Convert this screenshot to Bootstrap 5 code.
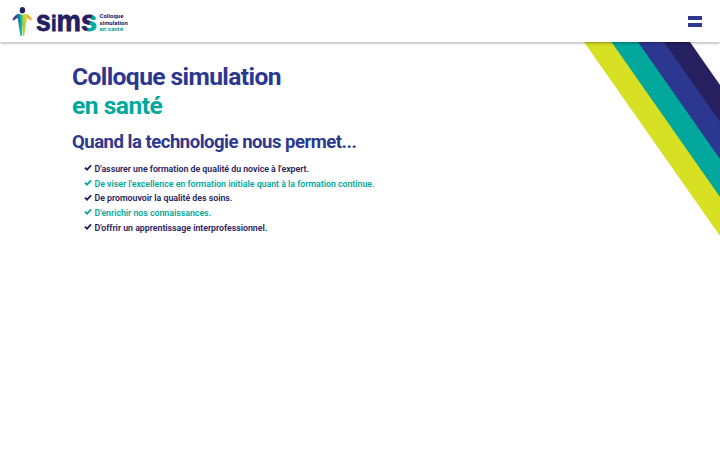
<!DOCTYPE html>
<html lang="fr">
<head>
  <meta charset="UTF-8" />
  <meta name="viewport" content="width=device-width, initial-scale=1" />
  <title>SIMS - Colloque simulation en santé</title>
  <link href="https://cdn.jsdelivr.net/npm/bootstrap@5.3.3/dist/css/bootstrap.min.css" rel="stylesheet">
  <style>
    :root {
      --sims-navy: #262060;
      --sims-blue: #2c388f;
      --sims-teal: #02a89c;
    }

    body {
      font-family: Roboto, "Liberation Sans", sans-serif;
      color: var(--sims-navy);
      background-color: #fff;
      overflow: hidden;
    }

    .site-header {
      height: 42px;
      padding: 0 18px 0 12px;
      background-color: #fff;
      box-shadow: 0 1px 3px rgba(0, 0, 0, .35);
      z-index: 2;
    }

    .wordmark {
      font-family: "Liberation Sans", sans-serif;
    }

    .menu-toggle {
      width: 14px;
      gap: 3px;
    }

    .menu-toggle span {
      height: 4px;
      background-color: var(--sims-blue);
    }

    .stripes {
      top: 42px;
      right: 0;
    }

    .intro {
      padding: 20px 72px 0;
    }

    .intro h1 {
      font-size: 24.6px;
      line-height: 29px;
      letter-spacing: -.6px;
      font-weight: 700;
      color: var(--sims-blue);
      margin-bottom: 10.5px;
    }

    .intro h1 .teal {
      letter-spacing: -.5px;
    }

    .intro h2 {
      font-size: 18.5px;
      line-height: 22px;
      letter-spacing: -.48px;
      font-weight: 700;
      color: var(--sims-blue);
      margin-bottom: 9.5px;
    }

    .teal {
      color: var(--sims-teal);
    }

    .goals {
      padding-left: 12px;
      font-size: 8.8px;
      line-height: 14.7px;
      letter-spacing: -.02px;
      font-weight: 600;
    }

    .goals svg {
      margin-right: 2.5px;
      margin-bottom: 2px;
      fill: var(--sims-navy);
    }

    .goals .teal svg {
      fill: var(--sims-teal);
    }
  </style>
</head>
<body>

<!-- Header -->
<header class="site-header d-flex align-items-center justify-content-between position-relative">
  <a href="#" class="d-flex" aria-label="SIMS">
    <svg width="118" height="42" viewBox="12 0 118 42">
      <defs>
        <linearGradient id="lastS" x1="0" y1="0" x2="1" y2=".7">
          <stop offset=".6" stop-color="#262060" />
          <stop offset=".66" stop-color="#02a89c" />
        </linearGradient>
        <linearGradient id="figure" gradientUnits="userSpaceOnUse" x1="12" y1="0" x2="32" y2="0">
          <stop offset=".1" stop-color="#2c388f" />
          <stop offset=".28" stop-color="#2b5f9d" />
          <stop offset=".42" stop-color="#02a89c" />
          <stop offset=".56" stop-color="#a5cf4c" />
          <stop offset=".7" stop-color="#d7d62e" />
          <stop offset=".9" stop-color="#f3a53a" />
        </linearGradient>
      </defs>
      <!-- Figure -->
      <ellipse cx="22.4" cy="10.2" rx="2.7" ry="3.3" fill="#262060" />
      <path d="M12.4 19.4Q15.5 14.2 19 13.8L22.4 15L25.8 13.8Q29 14.2 32 19.4L30.8 20.6L27 17.8L24.2 36H22.9L22.4 25L21.9 36H20.5L17.6 17.8L13.6 20.6Z" fill="url(#figure)" />
      <!-- Wordmark -->
      <g class="wordmark" font-size="29" font-weight="700" fill="#262060" stroke="#262060" stroke-width=".8">
        <text x="36.1" y="30.8" textLength="14.8" lengthAdjust="spacingAndGlyphs">s</text>
        <text x="51" y="30.8" font-size="22.5" textLength="5.6" lengthAdjust="spacingAndGlyphs">i</text>
        <text x="56.6" y="30.8" textLength="24.4" lengthAdjust="spacingAndGlyphs">m</text>
        <text x="81" y="30.8" textLength="16" lengthAdjust="spacingAndGlyphs" fill="url(#lastS)" stroke="url(#lastS)">s</text>
      </g>
      <g font-size="5.3" font-weight="700" fill="#262060">
        <text x="99.5" y="18.3" textLength="24" lengthAdjust="spacingAndGlyphs">Colloque</text>
        <text x="99.5" y="24.7" textLength="28.3" lengthAdjust="spacingAndGlyphs">simulation</text>
        <text x="99.5" y="31" textLength="23.5" lengthAdjust="spacingAndGlyphs" fill="#02a89c">en santé</text>
      </g>
    </svg>
  </a>
  <div class="menu-toggle d-flex flex-column" role="button" aria-label="Menu">
    <span></span>
    <span></span>
  </div>
</header>

<!-- Corner stripes -->
<svg class="stripes position-absolute" width="136" height="194" viewBox="0 0 136 194">
  <path d="M0 0H136V194Z" fill="#d7e022" />
  <path d="M27.5 0H136V155Z" fill="#02a89c" />
  <path d="M54 0H136V117Z" fill="#2c388f" />
  <path d="M80 0H136V80Z" fill="#262060" />
  <path d="M106 0H136V43Z" fill="#fff" />
</svg>

<!-- Intro -->
<main class="intro">
  <h1>Colloque simulation<br><span class="teal">en santé</span></h1>
  <h2>Quand la technologie nous permet...</h2>
  <ul class="goals list-unstyled mb-0">
    <li class="d-flex align-items-center"><svg width="8" height="8" viewBox="0 0 8 8"><path d="M0.3 4.2L1.6 2.9L3 4.3L6.5 0.8L7.8 2.1L3 6.9Z" /></svg>D'assurer une formation de qualité du novice à l'expert.</li>
    <li class="d-flex align-items-center teal"><svg width="8" height="8" viewBox="0 0 8 8"><path d="M0.3 4.2L1.6 2.9L3 4.3L6.5 0.8L7.8 2.1L3 6.9Z" /></svg>De viser l'excellence en formation initiale quant à la formation continue.</li>
    <li class="d-flex align-items-center"><svg width="8" height="8" viewBox="0 0 8 8"><path d="M0.3 4.2L1.6 2.9L3 4.3L6.5 0.8L7.8 2.1L3 6.9Z" /></svg>De promouvoir la qualité des soins.</li>
    <li class="d-flex align-items-center teal"><svg width="8" height="8" viewBox="0 0 8 8"><path d="M0.3 4.2L1.6 2.9L3 4.3L6.5 0.8L7.8 2.1L3 6.9Z" /></svg>D'enrichir nos connaissances.</li>
    <li class="d-flex align-items-center"><svg width="8" height="8" viewBox="0 0 8 8"><path d="M0.3 4.2L1.6 2.9L3 4.3L6.5 0.8L7.8 2.1L3 6.9Z" /></svg>D'offrir un apprentissage interprofessionnel.</li>
  </ul>
</main>

<script src="https://cdn.jsdelivr.net/npm/bootstrap@5.3.3/dist/js/bootstrap.bundle.min.js"></script>
</body>
</html>
